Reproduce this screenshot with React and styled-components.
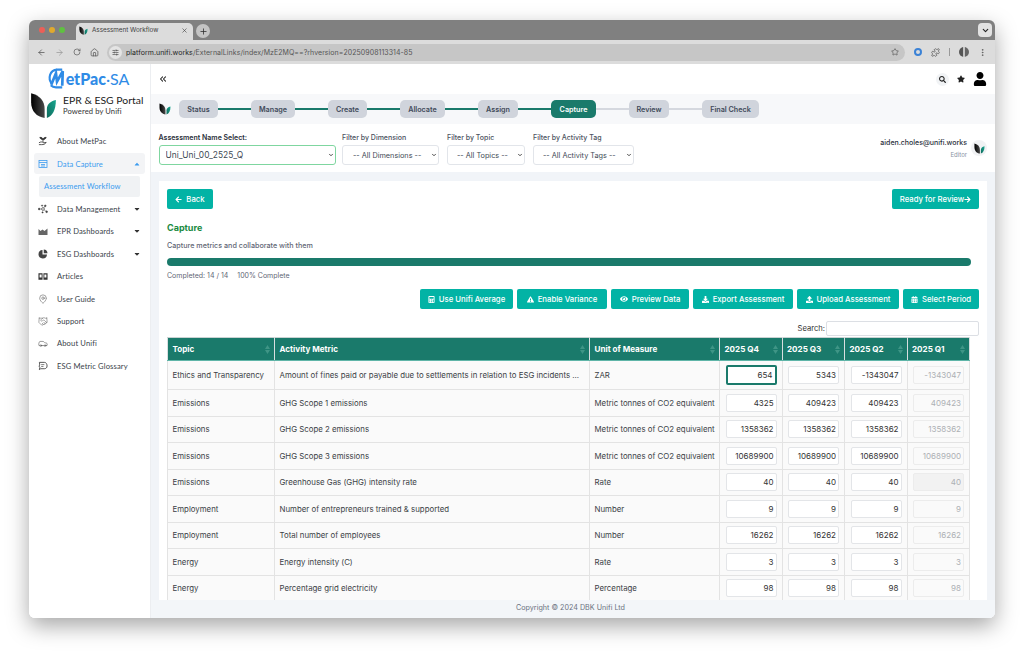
import React from 'react'
import styled, { createGlobalStyle } from 'styled-components'
import { ArrowLeft, ArrowRight, RotateCw, Home, Star, Puzzle, MoreVertical, ChevronDown, X, Plus, SlidersHorizontal, ChevronsLeft, MapPin, Handshake, Car } from 'lucide-react'
import { FaArrowLeft, FaArrowRight, FaCalculator, FaExclamationTriangle, FaEye, FaDownload, FaUpload, FaCalendarAlt, FaSearch, FaStar, FaUser, FaCaretUp, FaCaretDown } from 'react-icons/fa'

const GlobalStyle = createGlobalStyle`
    html, body { margin: 0; padding: 0; background: #fff; }
    * { box-sizing: border-box; }
    body { font-family: Inter, "Liberation Sans", sans-serif; overflow: hidden; }
`

const Page = styled.div`
    width: 1024px;
    height: 656px;
    padding: 20px 29px 38px;
`

const Window = styled.div`
    width: 966px;
    height: 598px;
    border-radius: 6px;
    overflow: hidden;
    display: flex;
    flex-direction: column;
    box-shadow: 0 8px 22px rgba(0, 0, 0, .35);
`

const TabStrip = styled.div`
    height: 20px;
    background: #808080;
    display: flex;
    align-items: flex-end;
    padding-left: 10px;
`

const Lights = styled.div`
    display: flex;
    gap: 4px;
    align-self: center;
    margin-right: 11px;
`

const Light = styled.span`
    width: 6px;
    height: 6px;
    border-radius: 50%;
    background: ${({ $color }) => $color};
`

const Tab = styled.div`
    width: 117px;
    height: 17px;
    background: #dcdcdc;
    border-radius: 5px 5px 0 0;
    display: flex;
    align-items: center;
    padding: 0 5px 3px 3px;
    font-size: 6.3px;
    color: #3c3c3c;
    gap: 4px;
`

const TabTitle = styled.span`
    flex: 1;
`

const NewTab = styled.span`
    width: 14px;
    height: 14px;
    margin: 0 0 2px 3px;
    border-radius: 50%;
    background: #c4c4c4;
    display: flex;
    align-items: center;
    justify-content: center;
    color: #2a2a2a;
`

const TabMenu = styled.span`
    margin-left: auto;
    margin-right: 3px;
    margin-bottom: 3px;
    width: 14px;
    height: 14px;
    border-radius: 4px;
    background: #e2e2e2;
    display: flex;
    align-items: center;
    justify-content: center;
    color: #222;
`

const Toolbar = styled.div`
    height: 24px;
    background: #dcdcdc;
    display: flex;
    align-items: center;
    padding: 0 8px;
    color: #555;
`

const NavIcons = styled.div`
    display: flex;
    gap: 9px;
    align-items: center;
    margin-right: 8px;
`

const UrlBar = styled.div`
    width: 799px;
    height: 17px;
    border-radius: 9px;
    background: #c6c6c6;
    display: flex;
    align-items: center;
    padding: 0 6px 0 2px;
    font-size: 7px;
    color: #555;
    letter-spacing: .05px;
`

const UrlSite = styled.span`
    width: 13px;
    height: 13px;
    border-radius: 50%;
    background: #e4e4e4;
    display: flex;
    align-items: center;
    justify-content: center;
    margin-right: 4px;
    color: #333;
`

const UrlHost = styled.span`
    color: #1f1f1f;
`

const UrlStar = styled.span`
    margin-left: auto;
    display: flex;
`

const ToolIcons = styled.div`
    display: flex;
    align-items: center;
    gap: 9px;
    margin-left: 9px;
`

const OnePassword = styled.span`
    width: 8px;
    height: 8px;
    border-radius: 50%;
    border: 2px solid #3b82d6;
    background: #dcdcdc;
`

const Divider = styled.span`
    width: 1px;
    height: 8px;
    background: #999;
`

const Profile = styled.span`
    width: 10px;
    height: 10px;
    border-radius: 50%;
    background: linear-gradient(90deg, #555 0 35%, #c5c5c5 35% 60%, #666 60%);
`

const Body = styled.div`
    flex: 1;
    min-height: 0;
    display: flex;
    background: #fff;
`

const Sidebar = styled.aside`
    width: 122px;
    flex-shrink: 0;
    background: #fff;
    border-right: 1px solid #eceef1;
    display: flex;
    flex-direction: column;
`

const MetPacLogo = styled.div`
    height: 27px;
    display: flex;
    align-items: center;
    justify-content: center;
    padding: 2px 3px 0 0;
    color: #2f8be6;
`

const MetPacBold = styled.span`
    font-family: Lato, sans-serif;
    font-weight: 900;
    font-size: 16px;
    margin-left: -1px;
`

const MetPacLight = styled.span`
    font-family: Lato, sans-serif;
    font-weight: 400;
    font-size: 16px;
`

const PortalRow = styled.div`
    height: 29px;
    display: flex;
    align-items: center;
    padding-left: 1px;
    gap: 6px;
`

const PortalTitle = styled.div`
    font-family: Lato, sans-serif;
    font-size: 10.4px;
    line-height: 11px;
    color: #222;
    white-space: nowrap;
`

const PortalSub = styled.div`
    font-size: 7.6px;
    line-height: 10px;
    color: #333;
    font-family: Lato, sans-serif;
    letter-spacing: .1px;
`

const Nav = styled.nav`
    padding: 10px 5px 0;
    display: flex;
    flex-direction: column;
`

const NavItem = styled.div`
    height: ${({ $active }) => ($active ? '21px' : '22.4px')};
    margin-top: ${({ $active }) => ($active ? '1px' : '0')};
    display: flex;
    align-items: center;
    padding-left: 4px;
    font-family: Lato, sans-serif;
    font-size: 7.6px;
    letter-spacing: .12px;
    color: ${({ $active }) => ($active ? '#3b9bef' : '#3a3f4a')};
    background: ${({ $active }) => ($active ? '#f3f4f6' : 'transparent')};
    border-radius: 3px;
    white-space: nowrap;
`

const NavIcon = styled.span`
    width: 10px;
    display: flex;
    justify-content: center;
    margin-right: 9px;
    color: ${({ $active }) => ($active ? '#3b9bef' : '#555')};
`

const NavCaret = styled.span`
    margin-left: auto;
    margin-right: 4px;
    display: flex;
    color: ${({ $active }) => ($active ? '#3b9bef' : '#333')};
`

const SubItem = styled.div`
    height: 21px;
    margin: 1.5px 5px 1px 5px;
    padding-left: 5px;
    display: flex;
    align-items: center;
    background: #f0f2f4;
    border-radius: 2px;
    font-family: Lato, sans-serif;
    font-size: 7.6px;
    letter-spacing: .12px;
    color: #3b9bef;
`

const Main = styled.main`
    flex: 1;
    min-width: 0;
    display: flex;
    flex-direction: column;
    background: #f1f4f8;
`

const TopBar = styled.div`
    height: 30px;
    flex-shrink: 0;
    background: #fff;
    display: flex;
    align-items: center;
    padding: 0 8px 0 7px;
    color: #222;
`

const TopRight = styled.div`
    margin-left: auto;
    display: flex;
    align-items: center;
    gap: 8px;
`

const SearchCircle = styled.span`
    width: 13px;
    height: 13px;
    border-radius: 50%;
    background: #f1f3f5;
    display: flex;
    align-items: center;
    justify-content: center;
`

const StepperBand = styled.div`
    height: 30px;
    flex-shrink: 0;
    background: #f7f8fa;
    display: flex;
    align-items: center;
    padding-left: 8px;
`

const Steps = styled.div`
    display: flex;
    align-items: center;
    margin-left: 8px;
`

const Step = styled.div`
    width: ${({ $width }) => $width}px;
    height: 18px;
    border-radius: 5px;
    background: ${({ $active }) => ($active ? '#1a7a6b' : '#d0d4dc')};
    color: ${({ $active }) => ($active ? '#fff' : '#414a5a')};
    font-size: 7.2px;
    font-weight: 600;
    display: flex;
    align-items: center;
    justify-content: center;
    white-space: nowrap;
`

const Connector = styled.span`
    width: 33px;
    height: 2px;
    background: ${({ $done }) => ($done ? '#1a7a6b' : '#d5d8df')};
`

const FilterBar = styled.div`
    height: 48px;
    flex-shrink: 0;
    background: #fff;
    display: flex;
    padding: 9px 8px 0 7.5px;
`

const Filter = styled.div`
    display: flex;
    flex-direction: column;
    margin-right: ${({ $gap }) => $gap}px;
`

const FilterLabel = styled.label`
    font-size: 7px;
    line-height: 10px;
    height: 12px;
    font-weight: ${({ $strong }) => ($strong ? 600 : 500)};
    color: ${({ $strong }) => ($strong ? '#2a2f3a' : '#4b5260')};
    white-space: nowrap;
`

const SelectWrap = styled.div`
    position: relative;
    width: ${({ $width }) => $width}px;
    height: 20px;
`

const SelectArrow = styled.span`
    position: absolute;
    right: 2px;
    top: 7px;
    display: flex;
    color: #333;
    pointer-events: none;
`

const FilterSelect = styled.select`
    appearance: none;
    display: block;
    width: 100%;
    height: 100%;
    padding: 0 2px 0 ${({ $left }) => $left}px;
    font-family: Inter, sans-serif;
    font-size: ${({ $focus }) => ($focus ? '8.4px' : '7.3px')};
    color: #414a55;
    background: #fff;
    border-radius: 3px;
    border: 1px solid ${({ $focus }) => ($focus ? '#7fd6a0' : '#e2e5ea')};
    outline: none;
`

const UserBlock = styled.div`
    margin-left: auto;
    display: flex;
    align-items: flex-start;
    gap: 4px;
    padding-top: 5px;
`

const UserText = styled.div`
    text-align: right;
`

const UserMail = styled.div`
    font-size: 7px;
    line-height: 10px;
    font-weight: 500;
    color: #2a2f3a;
`

const UserRole = styled.div`
    margin-top: 3px;
    font-size: 6px;
    line-height: 8px;
    color: #8a93a3;
`

const AvatarCircle = styled.div`
    width: 16px;
    height: 16px;
    margin-top: 2px;
    border-radius: 50%;
    background: #f1f2f4;
    display: flex;
    align-items: center;
    justify-content: center;
`

const Scroller = styled.div`
    flex: 1;
    min-height: 0;
    overflow: hidden;
    padding: 9px 8px 0;
`

const Card = styled.section`
    background: #fff;
    padding: 8px 8px 0;
`

const HeadRow = styled.div`
    display: flex;
    justify-content: space-between;
`

const TealButton = styled.button`
    width: ${({ $width }) => $width}px;
    height: 20px;
    padding: 0;
    border: none;
    border-radius: 2px;
    background: #02b3a5;
    color: #fff;
    font-family: Inter, sans-serif;
    font-size: 7.75px;
    font-weight: 500;
    display: flex;
    align-items: center;
    justify-content: center;
    gap: 4px;
    white-space: nowrap;
`

const ReviewArrow = styled(FaArrowRight)`
    margin-left: -4px;
`

const Title = styled.h2`
    margin: 13px 0 0;
    font-size: 9px;
    line-height: 12px;
    font-weight: 700;
    color: #1a8a3f;
`

const Subtitle = styled.p`
    margin: 7px 0 0;
    font-size: 7.2px;
    line-height: 9px;
    font-weight: 500;
    color: #5f6675;
`

const Progress = styled.div`
    width: 804px;
    height: 8px;
    margin-top: 8px;
    border-radius: 4px;
    background: #1a7a6b;
`

const ProgressText = styled.div`
    margin-top: 5px;
    font-size: 7px;
    line-height: 9px;
    color: #5f6675;
    display: flex;
    gap: 9px;
`

const Actions = styled.div`
    display: flex;
    justify-content: flex-end;
    gap: 4px;
    margin-top: 9px;
`

const SearchRow = styled.div`
    height: 16px;
    margin-top: 11px;
    display: flex;
    justify-content: flex-end;
    align-items: center;
    gap: 1px;
    font-size: 7.6px;
    color: #333;
`

const SearchInput = styled.input`
    width: 153px;
    height: 15px;
    border: 1px solid #dcdfe4;
    border-radius: 2px;
    background: #fff;
`

const Table = styled.table`
    width: 802px;
    margin-top: 1px;
    border-collapse: collapse;
    table-layout: fixed;
`

const Th = styled.th`
    height: 23px;
    padding: 0 4.5px;
    background: #1a7a6b;
    color: #fff;
    font-size: 8.1px;
    font-weight: 700;
    text-align: left;
    border: 1px solid #d8dee0;
    border-top: 1px solid #c9d2d2;
    border-bottom: 1px solid #5fb5a8;
    position: relative;
`

const SortMark = styled.svg`
    position: absolute;
    right: 4px;
    top: 7px;
    width: 5px;
    height: 9px;
    fill: #3f9586;
`

const Tr = styled.tr`
    height: ${({ $tall }) => ($tall ? '29px' : '26.5px')};
`

const Td = styled.td`
    padding: 0 4.5px;
    background: #fafafa;
    border: 1px solid #e3e3e3;
    font-size: 7.85px;
    color: #3b3f46;
    white-space: nowrap;
    overflow: hidden;
`

const NumCell = styled.td`
    padding: 0 5px 0 5.5px;
    background: #fafafa;
    border: 1px solid #e3e3e3;
`

const NumInput = styled.input`
    display: block;
    width: 51px;
    height: ${({ $focus }) => ($focus ? '20px' : '18px')};
    padding: 0 2px;
    text-align: right;
    font-family: Inter, sans-serif;
    font-size: 8px;
    color: ${({ disabled }) => (disabled ? '#adb0b4' : '#333')};
    background: ${({ disabled, $shade }) => ($shade ? '#f2f2f2' : disabled ? '#fafafa' : '#fff')};
    border: ${({ $focus, disabled }) => ($focus ? '2px solid #1a7a6b' : disabled ? '1px solid #ececec' : '1px solid #e3e5e8')};
    border-radius: 2px;
    outline: none;
    &:disabled { opacity: 1; }
`

const Footer = styled.footer`
    height: 18px;
    flex-shrink: 0;
    background: #f3f6f9;
    font-size: 7.2px;
    color: #6b7280;
    display: flex;
    align-items: center;
    justify-content: center;
    padding: 0 5px 4px 0;
`

const Leaf = ({ size = 12, id }) => {
    return <svg width={size} height={size} viewBox="0 0 24 24">
        <defs>
            <linearGradient id={`blk${id}`} x1="0" y1="0" x2="1" y2="0">
                <stop offset="0" stopColor="#000" />
                <stop offset="1" stopColor="#4a4a4a" />
            </linearGradient>
            <linearGradient id={`grn${id}`} x1="0" y1="1" x2="1" y2="0">
                <stop offset="0" stopColor="#0f6a5c" />
                <stop offset="1" stopColor="#17a68f" />
            </linearGradient>
        </defs>
        <path d="M1 1 C9 3 13 8 13 15 L13 23 C6 22 1 17 1 9 Z" fill={`url(#blk${id})`} />
        <path d="M23 7 C23 16 20 21 15 23 L15 15 C15 11 18 8 23 7 Z" fill={`url(#grn${id})`} />
    </svg>
}

const MetPacMark = () => <svg width="20" height="23" viewBox="0 0 18 22" fill="none" stroke="#2f8be6" strokeWidth="2">
    <path d="M4 16 C0 11 2 3 9 2.5 L14 2.5" />
    <path d="M14 19.5 L8 19.5 C6 19.5 4.5 19 3 17.5" />
    <path d="M3.5 17 L8 6 L9 14 L14.5 4 L14 18" strokeWidth="2.6" />
</svg>

const PlantHand = () => <svg width="11" height="10" viewBox="0 0 22 20" fill="none" stroke="#333" strokeWidth="1.8">
    <path d="M11 12 L11 6" />
    <path d="M11 7 C7 7 5 5 4 2 C8 2 10 3 11 6 C12 3 15 2 18 2 C17 5 15 7 11 7 Z" fill="#333" />
    <path d="M2 14 C6 11 10 12 13 14 L18 13 C16 17 12 18 8 18 L2 18" />
</svg>

const CaptureIcon = () => <svg width="10" height="10" viewBox="0 0 20 20" fill="none" stroke="#3b9bef" strokeWidth="1.6">
    <rect x="2" y="3" width="16" height="14" />
    <path d="M2 7 H18 M6 11 H14 M6 14 H14" />
</svg>

const NodesIcon = () => <svg width="11" height="10" viewBox="0 0 22 20" fill="#444" stroke="#444" strokeWidth="1">
    <circle cx="11" cy="10" r="3" fill="none" strokeWidth="1.6" />
    <circle cx="2.5" cy="10" r="2" />
    <circle cx="16" cy="3" r="2" />
    <circle cx="19" cy="16" r="2" />
    <circle cx="9" cy="2.5" r="1.5" />
    <circle cx="10" cy="17.5" r="1.5" />
    <path d="M4 10 H8 M13 8 L15 4 M13 12 L18 15" fill="none" />
</svg>

const AreaIcon = () => <svg width="10" height="10" viewBox="0 0 20 20" fill="#666">
    <path d="M1 18 V6 L5 10 L9 7 L13 10 L19 5 V18 Z" />
</svg>

const PieIcon = () => <svg width="10" height="10" viewBox="0 0 20 20" fill="#444">
    <path d="M9 2 A8.5 8.5 0 1 0 18 11 L9 11 Z" />
    <path d="M11.5 1 A8 8 0 0 1 19 8.5 L11.5 8.5 Z" />
</svg>

const BookIcon = () => <svg width="11" height="9" viewBox="0 0 22 18" fill="#333">
    <path fillRule="evenodd" d="M1 2 H10 V16 H1 Z M3.5 4.5 V11 H8 V4.5 Z" />
    <path fillRule="evenodd" d="M12 2 H21 V16 H12 Z M14 4.5 V11 H18.5 V4.5 Z" />
</svg>

const BubbleIcon = () => <svg width="11" height="10" viewBox="0 0 22 20" fill="none" stroke="#333" strokeWidth="1.8">
    <path d="M3 2 H14 C18 2 20 6 20 10 C20 14 17 16 14 16 H6 L3 18 L4 13 L2 10 L4 8 Z" />
    <path d="M7 7 H14 M7 11 H12" strokeWidth="1.4" />
</svg>

const SortIcon = () => <SortMark viewBox="0 0 10 18"><path d="M5 0 L10 8 H0 Z M5 18 L0 10 H10 Z" /></SortMark>

const navItems = [
    { label: 'Data Management', icon: <NodesIcon />, caret: true },
    { label: 'EPR Dashboards', icon: <AreaIcon />, caret: true },
    { label: 'ESG Dashboards', icon: <PieIcon />, caret: true },
    { label: 'Articles', icon: <BookIcon /> },
    { label: 'User Guide', icon: <MapPin size={10} strokeWidth={1.3} /> },
    { label: 'Support', icon: <Handshake size={11} strokeWidth={1.2} /> },
    { label: 'About Unifi', icon: <Car size={11} strokeWidth={1.4} /> },
    { label: 'ESG Metric Glossary', icon: <BubbleIcon /> },
]

const steps = [
    { label: 'Status', width: 39 },
    { label: 'Manage', width: 44 },
    { label: 'Create', width: 39 },
    { label: 'Allocate', width: 45 },
    { label: 'Assign', width: 40 },
    { label: 'Capture', width: 45, active: true },
    { label: 'Review', width: 40 },
    { label: 'Final Check', width: 57 },
]

const actions = [
    { label: 'Use Unifi Average', width: 93, icon: <FaCalculator size={7} /> },
    { label: 'Enable Variance', width: 90, icon: <FaExclamationTriangle size={7} /> },
    { label: 'Preview Data', width: 78, icon: <FaEye size={8} /> },
    { label: 'Export Assessment', width: 100, icon: <FaDownload size={7} /> },
    { label: 'Upload Assessment', width: 102, icon: <FaUpload size={7} /> },
    { label: 'Select Period', width: 76, icon: <FaCalendarAlt size={7} /> },
]

const rows = [
    { topic: 'Ethics and Transparency', metric: 'Amount of fines paid or payable due to settlements in relation to ESG incidents ...', unit: 'ZAR', q: [654, 5343, -1343047, -1343047], tall: true },
    { topic: 'Emissions', metric: 'GHG Scope 1 emissions', unit: 'Metric tonnes of CO2 equivalent', q: [4325, 409423, 409423, 409423] },
    { topic: 'Emissions', metric: 'GHG Scope 2 emissions', unit: 'Metric tonnes of CO2 equivalent', q: [1358362, 1358362, 1358362, 1358362] },
    { topic: 'Emissions', metric: 'GHG Scope 3 emissions', unit: 'Metric tonnes of CO2 equivalent', q: [10689900, 10689900, 10689900, 10689900] },
    { topic: 'Emissions', metric: 'Greenhouse Gas (GHG) intensity rate', unit: 'Rate', q: [40, 40, 40, 40], shade: true },
    { topic: 'Employment', metric: 'Number of entrepreneurs trained & supported', unit: 'Number', q: [9, 9, 9, 9] },
    { topic: 'Employment', metric: 'Total number of employees', unit: 'Number', q: [16262, 16262, 16262, 16262] },
    { topic: 'Energy', metric: 'Energy intensity (C)', unit: 'Rate', q: [3, 3, 3, 3] },
    { topic: 'Energy', metric: 'Percentage grid electricity', unit: 'Percentage', q: [98, 98, 98, 98] },
]

const columns = [
    { label: 'Topic', width: 107 },
    { label: 'Activity Metric', width: 315 },
    { label: 'Unit of Measure', width: 130 },
    { label: '2025 Q4', width: 62.5 },
    { label: '2025 Q3', width: 62.5 },
    { label: '2025 Q2', width: 62.5 },
    { label: '2025 Q1', width: 62.5 },
]

const filters = [
    { label: 'Filter by Dimension', option: '-- All Dimensions --', width: 97, left: 10, gap: 8 },
    { label: 'Filter by Topic', option: '-- All Topics --', width: 78, left: 9, gap: 8 },
    { label: 'Filter by Activity Tag', option: '-- All Activity Tags --', width: 101, left: 9, gap: 0 },
]

const Select = ({ width, left, focus, option }) => <SelectWrap $width={width}>
    <FilterSelect $left={left} $focus={focus}><option>{option}</option></FilterSelect>
    <SelectArrow><ChevronDown size={6} strokeWidth={3.5} /></SelectArrow>
</SelectWrap>

export default function App() {
    return <Page>
        <GlobalStyle />
        <Window>
            <TabStrip>
                <Lights>
                    <Light $color="#ec5f57" />
                    <Light $color="#e0a92e" />
                    <Light $color="#5fc140" />
                </Lights>
                <Tab>
                    <Leaf size={9} id="tab" />
                    <TabTitle>Assessment Workflow</TabTitle>
                    <X size={7} />
                </Tab>
                <NewTab><Plus size={9} /></NewTab>
                <TabMenu><ChevronDown size={9} strokeWidth={3} /></TabMenu>
            </TabStrip>
            <Toolbar>
                <NavIcons>
                    <ArrowLeft size={9} />
                    <ArrowRight size={9} color="#999" />
                    <RotateCw size={8} />
                    <Home size={9} />
                </NavIcons>
                <UrlBar>
                    <UrlSite><SlidersHorizontal size={7} /></UrlSite>
                    <UrlHost>platform.unifi.works</UrlHost>/ExternalLinks/index/MzE2MQ==?rhversion=20250908113314-85
                    <UrlStar><Star size={8} /></UrlStar>
                </UrlBar>
                <ToolIcons>
                    <OnePassword />
                    <Puzzle size={9} />
                    <Divider />
                    <Profile />
                    <MoreVertical size={9} />
                </ToolIcons>
            </Toolbar>
            <Body>
                <Sidebar>
                    <MetPacLogo>
                        <MetPacMark />
                        <MetPacBold>etPac</MetPacBold>
                        <MetPacLight>·SA</MetPacLight>
                    </MetPacLogo>
                    <PortalRow>
                        <Leaf size={27} id="portal" />
                        <div>
                            <PortalTitle>EPR &amp; ESG Portal</PortalTitle>
                            <PortalSub>Powered by Unifi</PortalSub>
                        </div>
                    </PortalRow>
                    <Nav>
                        <NavItem><NavIcon><PlantHand /></NavIcon>About MetPac</NavItem>
                        <NavItem $active>
                            <NavIcon $active><CaptureIcon /></NavIcon>Data Capture
                            <NavCaret $active><FaCaretUp size={8} /></NavCaret>
                        </NavItem>
                        <SubItem>Assessment Workflow</SubItem>
                        {navItems.map(item => <NavItem key={item.label}>
                            <NavIcon>{item.icon}</NavIcon>{item.label}
                            {item.caret && <NavCaret><FaCaretDown size={8} /></NavCaret>}
                        </NavItem>)}
                    </Nav>
                </Sidebar>
                <Main>
                    <TopBar>
                        <ChevronsLeft size={10} strokeWidth={2.5} />
                        <TopRight>
                            <SearchCircle><FaSearch size={7} /></SearchCircle>
                            <FaStar size={8} />
                            <FaUser size={14} color="#000" />
                        </TopRight>
                    </TopBar>
                    <StepperBand>
                        <Leaf size={12} id="band" />
                        <Steps>
                            {steps.map((step, i) => <React.Fragment key={step.label}>
                                <Step $active={step.active} $width={step.width}>{step.label}</Step>
                                {i < steps.length - 1 && <Connector $done={i < 5} />}
                            </React.Fragment>)}
                        </Steps>
                    </StepperBand>
                    <FilterBar>
                        <Filter $gap={6.5}>
                            <FilterLabel $strong>Assessment Name Select:</FilterLabel>
                            <Select width={177} left={6} focus option="Uni_Uni_00_2525_Q" />
                        </Filter>
                        {filters.map(filter => <Filter key={filter.label} $gap={filter.gap}>
                            <FilterLabel>{filter.label}</FilterLabel>
                            <Select width={filter.width} left={filter.left} option={filter.option} />
                        </Filter>)}
                        <UserBlock>
                            <UserText>
                                <UserMail>aiden.choles@unifi.works</UserMail>
                                <UserRole>Editor</UserRole>
                            </UserText>
                            <AvatarCircle><Leaf size={11} id="avatar" /></AvatarCircle>
                        </UserBlock>
                    </FilterBar>
                    <Scroller>
                        <Card>
                            <HeadRow>
                                <TealButton $width={46}><FaArrowLeft size={7} />Back</TealButton>
                                <TealButton $width={87}>Ready for Review<ReviewArrow size={7} /></TealButton>
                            </HeadRow>
                            <Title>Capture</Title>
                            <Subtitle>Capture metrics and collaborate with them</Subtitle>
                            <Progress />
                            <ProgressText>
                                <span>Completed: 14 / 14</span>
                                <span>100% Complete</span>
                            </ProgressText>
                            <Actions>
                                {actions.map(action => <TealButton key={action.label} $width={action.width}>
                                    {action.icon}{action.label}
                                </TealButton>)}
                            </Actions>
                            <SearchRow>Search:<SearchInput /></SearchRow>
                            <Table>
                                <colgroup>
                                    {columns.map(col => <col key={col.label} width={col.width} />)}
                                </colgroup>
                                <thead>
                                    <tr>
                                        {columns.map(col => <Th key={col.label}>{col.label}<SortIcon /></Th>)}
                                    </tr>
                                </thead>
                                <tbody>
                                    {rows.map((row, r) => <Tr key={row.metric} $tall={row.tall}>
                                        <Td>{row.topic}</Td>
                                        <Td>{row.metric}</Td>
                                        <Td>{row.unit}</Td>
                                        {row.q.map((value, i) => <NumCell key={i}>
                                            <NumInput
                                                readOnly
                                                value={value}
                                                disabled={i === 3}
                                                $focus={r === 0 && i === 0}
                                                $shade={row.shade && i === 3}
                                            />
                                        </NumCell>)}
                                    </Tr>)}
                                </tbody>
                            </Table>
                        </Card>
                    </Scroller>
                    <Footer>Copyright © 2024 DBK Unifi Ltd</Footer>
                </Main>
            </Body>
        </Window>
    </Page>
}
